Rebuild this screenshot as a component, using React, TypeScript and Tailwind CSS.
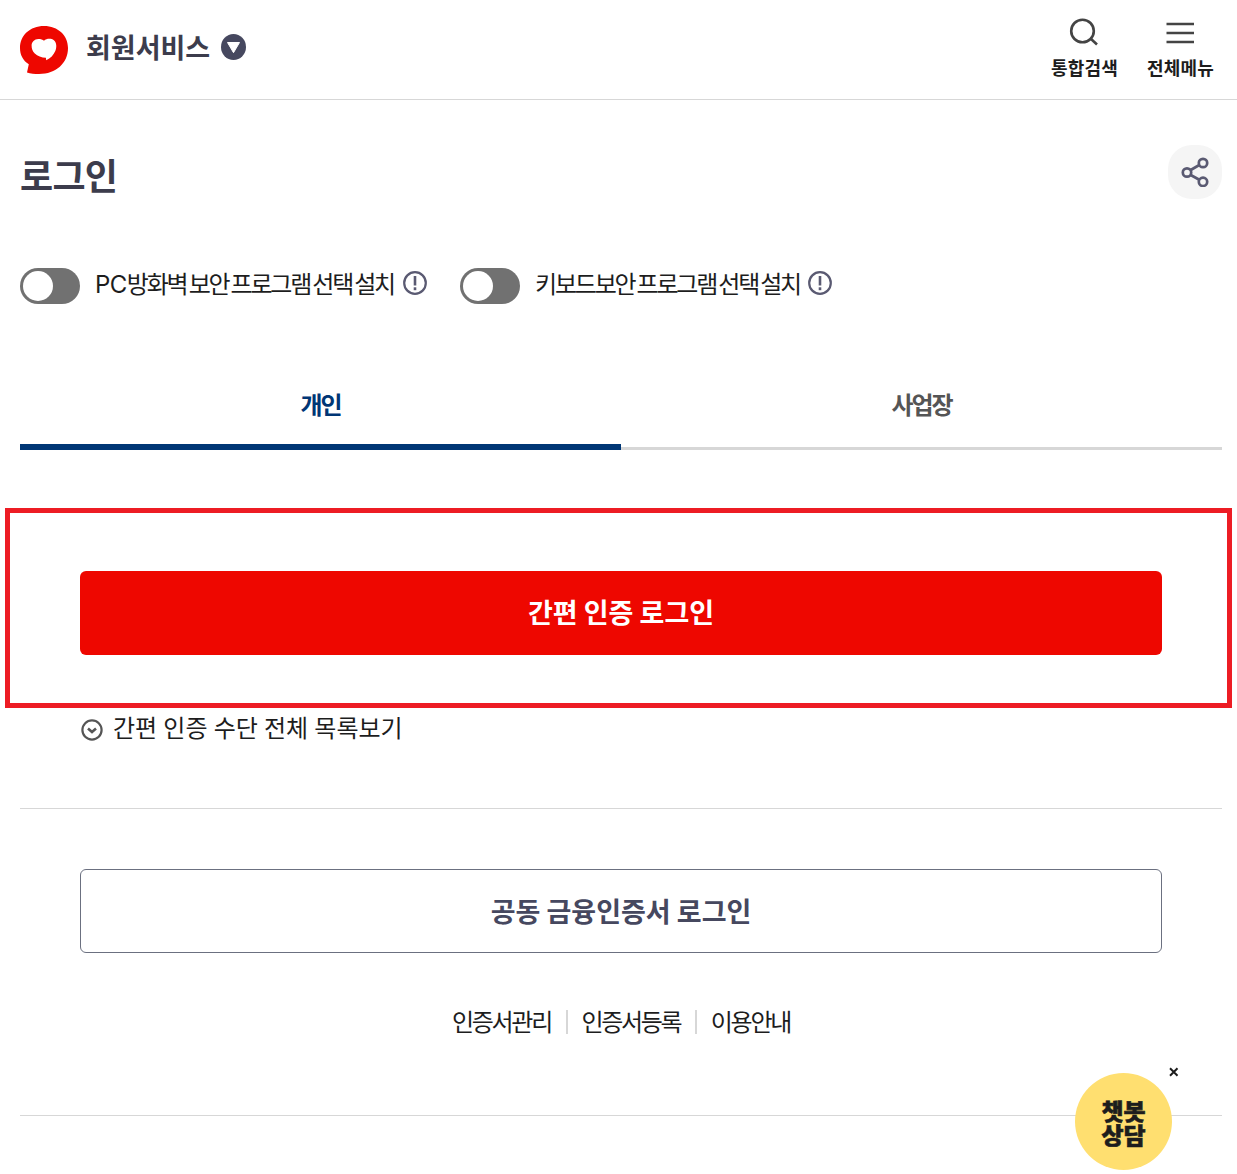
import { useState } from 'react';

const programs = [
  { id: 'firewall', prefix: 'PC', label: '방화벽 보안 프로그램 선택 설치' },
  { id: 'keyboard', prefix: '', label: '키보드보안 프로그램 선택 설치' },
];

const tabs = ['개인', '사업장'];
const certLinks = ['인증서관리', '인증서등록', '이용안내'];

function Logo() {
  return (
    <svg width="48" height="48" viewBox="0 0 48 48">
      <path
        d="M24 0C38 0 48 9.5 48 22C48 37 36 48 19 48C14.500 48 10.500 47.500 7 46.500L8.800 38.300C3 34.500 0 29 0 22C0 9.500 10 0 24 0Z"
        fill="#ee0700"
      />
      <path
        d="M24 14.800C26.500 12.500 31 12.200 33.900 14.200C36.900 16.800 36.800 21.500 35.300 25C33.600 29 30.600 32.300 26.200 34.300L25.900 31.800C21.500 31.800 17.500 30.300 14.800 27.600C12.400 25 11.600 22.500 11.600 19.500C11.600 16 14.500 13 18.300 13C20.800 13 22.800 13.600 24 14.800Z"
        fill="#fff"
      />
    </svg>
  );
}

function InfoIcon() {
  return (
    <svg width="24" height="24" viewBox="0 0 24 24" fill="none" stroke="#5a5a72">
      <circle cx="12" cy="12" r="10.800" strokeWidth="2.200" />
      <path d="M12 5V14.500" strokeWidth="2.600" />
      <path d="M12 16.300V19.200" strokeWidth="2.600" />
    </svg>
  );
}

function Header() {
  return (
    <header className="flex h-[100px] justify-between border-b border-[#d7d7d7] pl-5 pr-[23px]">
      <div className="flex h-[94px] items-center pt-[5px]">
        <Logo />
        <span className="ml-[18px] -mt-1.5 text-[27px] font-bold leading-10 text-[#3c3c4c]">회원서비스</span>
        <svg className="ml-[11px] -mt-[5px]" width="25" height="26" viewBox="0 0 25 26">
          <ellipse cx="12.500" cy="13" rx="12.500" ry="13" fill="#46485f" />
          <path d="M6.500 8.500H18.500L12.500 18.700Z" fill="#fff" stroke="#fff" strokeLinejoin="round" />
        </svg>
      </div>
      <nav className="flex gap-[29px] pt-[17px]">
        <button className="flex flex-col items-center">
          <svg width="32" height="32" viewBox="0 0 32 32" fill="none" stroke="#444" strokeWidth="2.600">
            <circle cx="14.500" cy="14" r="11.300" />
            <path d="M22.500 21.500L29 27.500" />
          </svg>
          <span className="mt-1 text-[18px] font-bold leading-7 tracking-[0.2px] text-[#1d1d1d]">통합검색</span>
        </button>
        <button className="flex flex-col items-center">
          <svg width="32" height="32" viewBox="0 0 32 32" fill="none" stroke="#444" strokeWidth="2.500">
            <path d="M2.500 7H30M2.500 16H30M2.500 25H30" />
          </svg>
          <span className="mt-1 text-[18px] font-bold leading-7 tracking-[0.2px] text-[#1d1d1d]">전체메뉴</span>
        </button>
      </nav>
    </header>
  );
}

function Toggle({ on, onClick }: { on: boolean; onClick: () => void }) {
  return (
    <button
      onClick={onClick}
      className={`mt-1 flex h-9 w-[60px] items-center rounded-full px-[3px] ${on ? 'justify-end bg-[#003675]' : 'justify-start bg-[#717171]'}`}
    >
      <span className="size-[30px] rounded-full bg-white" />
    </button>
  );
}

export default function App() {
  const [activeTab, setActiveTab] = useState('개인');
  const [installed, setInstalled] = useState<string[]>([]);
  const [chatOpen, setChatOpen] = useState(true);

  const toggleProgram = (id: string) => {
    setInstalled((prev) => (prev.includes(id) ? prev.filter((p) => p !== id) : [...prev, id]));
  };

  return (
    <div className="relative h-[1174px] overflow-hidden bg-white font-['Noto_Sans_CJK_KR','Noto_Sans',sans-serif] text-[#1d1d1d]">
      <Header />

      <main className="pl-5 pr-[15px]">
        <div className="flex justify-between pt-[45px]">
          <h1 className="mt-0.5 text-[36px] font-bold leading-[54px] tracking-[-0.7px] text-[#3c3c4c]">로그인</h1>
          <button className="flex size-[54px] items-center justify-center rounded-[24px] bg-[#f5f5f5]">
            <svg width="28" height="30" viewBox="0 0 28 30" fill="none" stroke="#5a5a72" strokeWidth="2.700">
              <circle cx="6" cy="15.500" r="4.200" />
              <circle cx="22" cy="6" r="4.200" />
              <circle cx="22" cy="24.800" r="4.200" />
              <path d="M9.700 13L18.300 8M9.700 18L18.300 22.800" />
            </svg>
          </button>
        </div>

        <div className="mt-[63px] flex">
          {programs.map((p) => (
            <div key={p.id} className="flex h-10 w-[440px] items-start">
              <Toggle on={installed.includes(p.id)} onClick={() => toggleProgram(p.id)} />
              <span className="ml-[15px] -mt-px whitespace-nowrap text-[24px] leading-10 tracking-[-2.2px] [word-spacing:-1px]">
                {p.prefix && <span className="font-['Inter'] tracking-[-0.5px]">{p.prefix}</span>}
                {p.label}
              </span>
              <span className="ml-[8.500px] mt-[7px]">
                <InfoIcon />
              </span>
            </div>
          ))}
        </div>

        <div className="mt-[56px] flex h-[90px]">
          {tabs.map((tab) => (
            <button
              key={tab}
              onClick={() => setActiveTab(tab)}
              className={`flex-1 text-[24px] font-bold tracking-[-2.1px] ${
                activeTab === tab
                  ? 'border-b-6 border-[#003675] pt-[3px] text-[#003675]'
                  : 'border-b-3 border-[#d7d7d7] text-[#555]'
              }`}
            >
              {tab}
            </button>
          ))}
        </div>

        <section className="-ml-[15px] -mr-[10px] mt-[58px] h-[200px] w-[1227px] border-5 border-[#ed1c24] px-[70px] pt-[58px]">
          <button className="h-[84px] w-[1082px] rounded-md bg-[#ee0700] pb-0.5 text-[27px] font-bold text-white">
            간편 인증 로그인
          </button>
        </section>

        <button className="ml-[60px] flex h-10 items-center text-[24px] [word-spacing:0.8px]">
          <svg className="mt-1 mr-[9px]" width="24" height="24" viewBox="0 0 24 24" fill="none" stroke="#555">
            <circle cx="12" cy="12" r="9.600" strokeWidth="2.200" />
            <path d="M8 10.500L12 14L16 10.500" strokeWidth="2.600" />
          </svg>
          <span className="-mt-0.5">간편 인증 수단 전체 목록보기</span>
        </button>

        <div className="mt-[60px] border-t border-[#d7d7d7] px-[60px] pt-[60px]">
          <button className="h-[84px] w-full rounded-md border border-[#6b7080] text-[27px] font-bold text-[#46485f]">
            공동 금융인증서 로그인
          </button>
        </div>

        <div className="mt-[49px] flex h-10 items-center justify-center">
          {certLinks.map((link, i) => (
            <div key={link} className="flex items-center">
              {i > 0 && <span className="ml-[15px] mr-[13.500px] h-6 w-[2px] bg-[#d7d7d7]" />}
              <a href="#" className="-mt-0.5 text-[24px] leading-10 tracking-[-2.300px]">{link}</a>
            </div>
          ))}
        </div>

        <div className="mt-[73px] border-t border-[#d7d7d7]" />
      </main>

      {chatOpen && (
        <div className="absolute left-[1075px] top-[1064px]">
          <button className="mt-[9px] flex size-[97px] flex-col items-center justify-center rounded-full bg-[#ffdf70] text-[24px] font-black leading-6 text-[#1d1d1d] [-webkit-text-stroke:0.6px_#1d1d1d]">
            <span className="origin-bottom scale-y-95">챗봇</span>
            <span className="origin-bottom scale-y-95">상담</span>
          </button>
          <button onClick={() => setChatOpen(false)} className="absolute left-[94px] top-[3px]">
            <svg width="10" height="10" viewBox="0 0 10 10" stroke="#1d1d1d" strokeWidth="2">
              <path d="M1 1.200L8.500 8.700M8.500 1.200L1 8.700" />
            </svg>
          </button>
        </div>
      )}
    </div>
  );
}
